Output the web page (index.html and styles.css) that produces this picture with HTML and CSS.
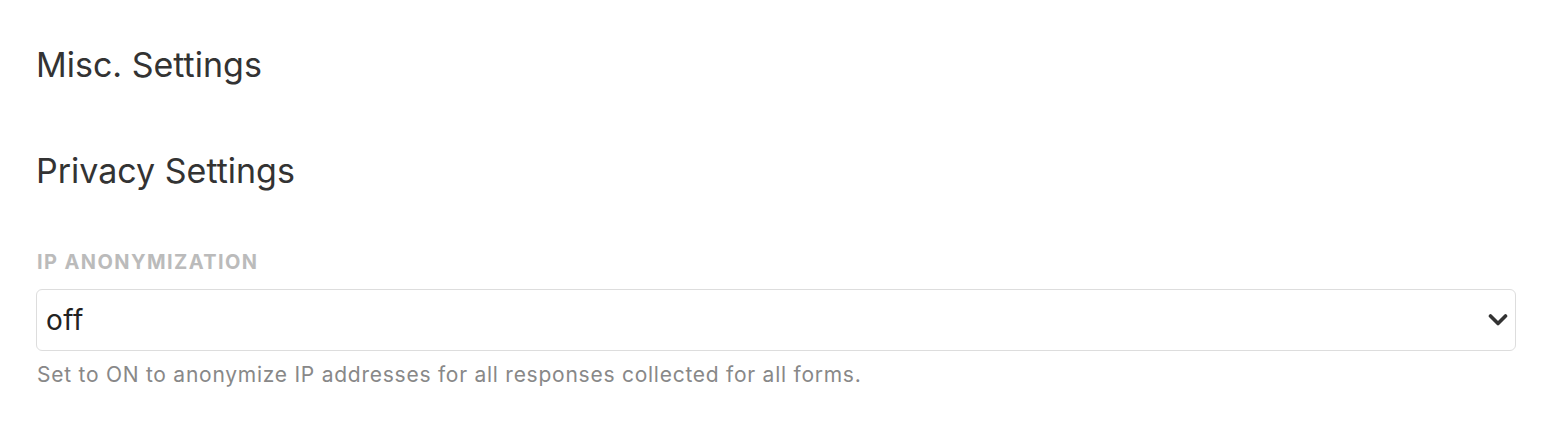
FILE: index.html
```html
<!DOCTYPE html>
<html>
<head>
<meta charset="utf-8">
<link rel="stylesheet" href="styles.css">
</head>
<body>
<div class="page">
  <h2 class="section-title">Misc. Settings</h2>
  <h3 class="section-title sub">Privacy Settings</h3>
  <div class="field">
    <label class="field-label">IP Anonymization</label>
    <div class="select">
      <span class="select-value">off</span>
      <svg class="chevron" width="20" height="14" viewBox="0 0 20 14"><polyline points="2.5,3 10,10.5 17.5,3" fill="none" stroke="#333" stroke-width="3.6" stroke-linecap="round" stroke-linejoin="round"/></svg>
    </div>
    <p class="help">Set to ON to anonymize IP addresses for all responses collected for all forms.</p>
  </div>
</div>
</body>
</html>
```
FILE: styles.css
```css
html, body {
  margin: 0;
  padding: 0;
  background: #fff;
}
body {
  font-family: Inter, Roboto, "Noto Sans", sans-serif;
  color: #333;
}
.page {
  padding: 43px 26px 0 36px;
}
.section-title {
  margin: 0;
  font-size: 34px;
  font-weight: 400;
  line-height: 44px;
  color: #333;
}
.section-title.sub {
  margin-top: 62px;
}
.field {
  margin-top: 57px;
}
.field-label {
  display: block;
  font-size: 20px;
  font-weight: 700;
  text-transform: uppercase;
  color: #bbb;
  line-height: 24px;
  letter-spacing: 1.4px;
  padding-left: 1px;
}
.select {
  margin-top: 15px;
  height: 62px;
  border: 1px solid #ddd;
  border-radius: 6px;
  display: flex;
  align-items: center;
  justify-content: space-between;
  padding: 0 7px 0 9px;
  box-sizing: border-box;
}
.select-value {
  font-size: 28px;
  letter-spacing: 0.5px;
  color: #222;
}
.chevron {
  display: block;
}
.help {
  margin: 12px 0 0 1px;
  font-size: 21px;
  line-height: 24px;
  letter-spacing: 0.75px;
  color: #888;
}
```
